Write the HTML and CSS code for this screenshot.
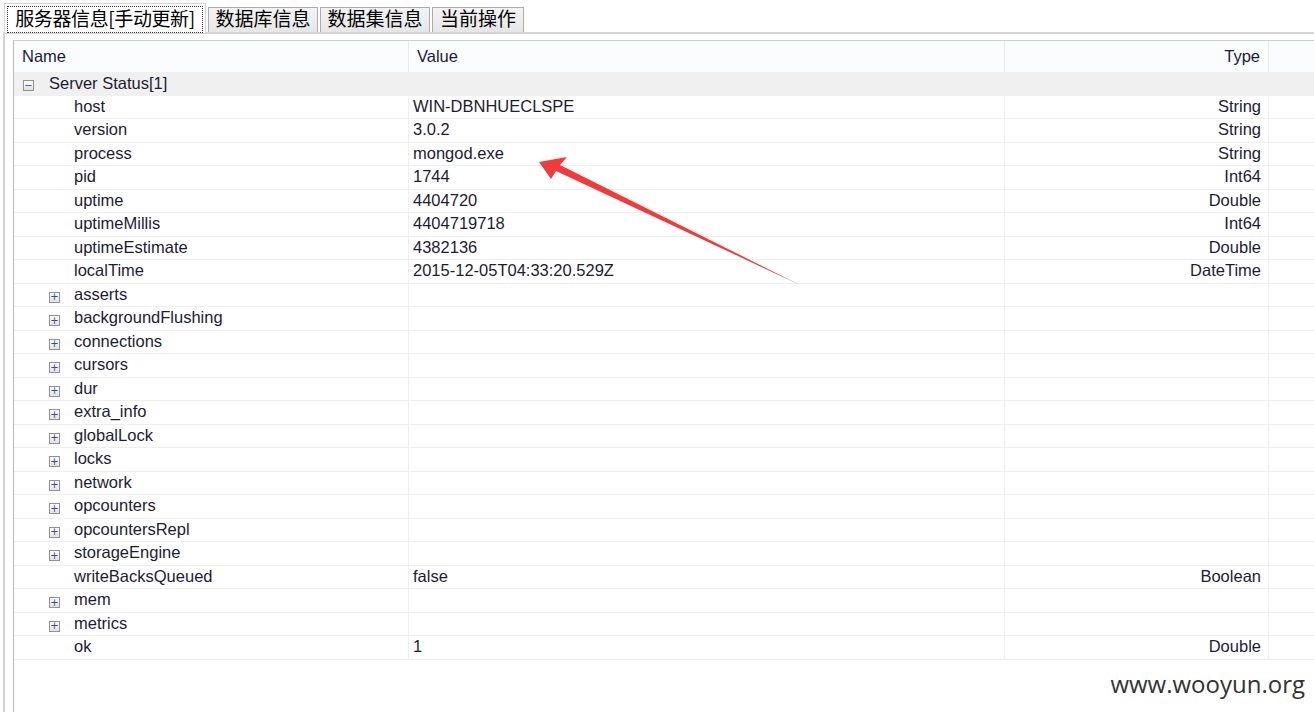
FILE: index.html
```html
<!DOCTYPE html>
<html lang="zh">

<head>
    <meta charset="UTF-8">
    <title>服务器信息</title>
    <link rel="stylesheet" href="styles.css">
</head>

<body>
    <div class="tabs">
        <div class="tab tab-active"><span class="tab-focus">服务器信息[手动更新]</span></div>
        <div class="tab tab-wide">数据库信息</div>
        <div class="tab tab-wide">数据集信息</div>
        <div class="tab tab-narrow">当前操作</div>
    </div>
    <div class="tab-page">
        <div class="tree">
            <div class="tree-head">
                <div class="cell">Name</div>
                <div class="cell">Value</div>
                <div class="cell cell-type">Type</div>
                <div class="cell"></div>
            </div>
            <div class="tree-root">
                <span class="toggle">&minus;</span>
                <span>Server Status[1]</span>
            </div>
            <div class="row"><div class="cell name">host</div><div class="cell">WIN-DBNHUECLSPE</div><div class="cell cell-type">String</div><div class="cell"></div></div>
            <div class="row"><div class="cell name">version</div><div class="cell">3.0.2</div><div class="cell cell-type">String</div><div class="cell"></div></div>
            <div class="row"><div class="cell name">process</div><div class="cell">mongod.exe</div><div class="cell cell-type">String</div><div class="cell"></div></div>
            <div class="row"><div class="cell name">pid</div><div class="cell">1744</div><div class="cell cell-type">Int64</div><div class="cell"></div></div>
            <div class="row"><div class="cell name">uptime</div><div class="cell">4404720</div><div class="cell cell-type">Double</div><div class="cell"></div></div>
            <div class="row"><div class="cell name">uptimeMillis</div><div class="cell">4404719718</div><div class="cell cell-type">Int64</div><div class="cell"></div></div>
            <div class="row"><div class="cell name">uptimeEstimate</div><div class="cell">4382136</div><div class="cell cell-type">Double</div><div class="cell"></div></div>
            <div class="row"><div class="cell name">localTime</div><div class="cell">2015-12-05T04:33:20.529Z</div><div class="cell cell-type">DateTime</div><div class="cell"></div></div>
            <div class="row"><div class="cell name"><span class="toggle">+</span>asserts</div><div class="cell"></div><div class="cell cell-type"></div><div class="cell"></div></div>
            <div class="row"><div class="cell name"><span class="toggle">+</span>backgroundFlushing</div><div class="cell"></div><div class="cell cell-type"></div><div class="cell"></div></div>
            <div class="row"><div class="cell name"><span class="toggle">+</span>connections</div><div class="cell"></div><div class="cell cell-type"></div><div class="cell"></div></div>
            <div class="row"><div class="cell name"><span class="toggle">+</span>cursors</div><div class="cell"></div><div class="cell cell-type"></div><div class="cell"></div></div>
            <div class="row"><div class="cell name"><span class="toggle">+</span>dur</div><div class="cell"></div><div class="cell cell-type"></div><div class="cell"></div></div>
            <div class="row"><div class="cell name"><span class="toggle">+</span>extra_info</div><div class="cell"></div><div class="cell cell-type"></div><div class="cell"></div></div>
            <div class="row"><div class="cell name"><span class="toggle">+</span>globalLock</div><div class="cell"></div><div class="cell cell-type"></div><div class="cell"></div></div>
            <div class="row"><div class="cell name"><span class="toggle">+</span>locks</div><div class="cell"></div><div class="cell cell-type"></div><div class="cell"></div></div>
            <div class="row"><div class="cell name"><span class="toggle">+</span>network</div><div class="cell"></div><div class="cell cell-type"></div><div class="cell"></div></div>
            <div class="row"><div class="cell name"><span class="toggle">+</span>opcounters</div><div class="cell"></div><div class="cell cell-type"></div><div class="cell"></div></div>
            <div class="row"><div class="cell name"><span class="toggle">+</span>opcountersRepl</div><div class="cell"></div><div class="cell cell-type"></div><div class="cell"></div></div>
            <div class="row"><div class="cell name"><span class="toggle">+</span>storageEngine</div><div class="cell"></div><div class="cell cell-type"></div><div class="cell"></div></div>
            <div class="row"><div class="cell name">writeBacksQueued</div><div class="cell">false</div><div class="cell cell-type">Boolean</div><div class="cell"></div></div>
            <div class="row"><div class="cell name"><span class="toggle">+</span>mem</div><div class="cell"></div><div class="cell cell-type"></div><div class="cell"></div></div>
            <div class="row"><div class="cell name"><span class="toggle">+</span>metrics</div><div class="cell"></div><div class="cell cell-type"></div><div class="cell"></div></div>
            <div class="row"><div class="cell name">ok</div><div class="cell">1</div><div class="cell cell-type">Double</div><div class="cell"></div></div>
        </div>
    </div>

    <!-- 标注箭头 -->
    <svg class="arrow" width="1314" height="712" viewBox="0 0 1314 712">
        <polygon points="539,162 567,157 560,165 800,285 556,171 551,179" fill="#f23a3a"/>
    </svg>

    <div class="watermark">www.wooyun.org</div>
</body>

</html>
```

FILE: styles.css
```css
body {
    margin: 0;
    padding: 0;
    background: #fff;
    font-family: "Liberation Sans", Arial, sans-serif;
    font-size: 16.5px;
    color: #1c1c34;
    height: 712px;
    overflow: hidden;
    position: relative;
}

.tabs {
    display: flex;
    align-items: flex-end;
    gap: 2px;
    padding: 3px 0 0 4px;
    height: 29px;
    font-family: "Noto Sans CJK SC", sans-serif;
    font-size: 19px;
    color: #000;
    position: relative;
    z-index: 1;
}

.tab {
    height: 25px;
    padding: 0 0 5px;
    display: flex;
    align-items: center;
    justify-content: center;
    background: linear-gradient(#f3f3f3, #e6e6e6);
    border: 1px solid #acacac;
    border-bottom: none;
    box-sizing: border-box;
    line-height: 1;
}

.tab-wide {
    width: 110px;
}

.tab-narrow {
    width: 92px;
}

.tab-active {
    width: 202px;
    height: 30px;
    padding: 2px 2px 0 2px;
    background: #fff;
    border-color: #d4d4d4;
    margin-bottom: -1px;
}

.tab-focus {
    border: 1px dotted #333;
    width: 100%;
    height: 100%;
    box-sizing: border-box;
    display: flex;
    align-items: center;
    justify-content: center;
    padding-bottom: 5px;
    letter-spacing: -0.4px;
}

.tab-page {
    border-top: 2px solid #d4d4d4;
    border-left: 2px solid #d4d4d4;
    margin-left: 3px;
    padding: 6px 0 0 8px;
    height: 680px;
    box-sizing: border-box;
}

.tree {
    border-top: 1px solid #cfcfcf;
    border-left: 1px solid #b9b9b9;
    height: 100%;
}

.tree-head, .row {
    display: grid;
    grid-template-columns: 395px 596px 264px 1fr;
}

.tree-head {
    height: 31px;
    background: #fbfcfe;
    color: #1a1a3a;
}

.tree-head .cell {
    border-right: 1px solid #e3ecf7;
    padding: 0 8px;
    line-height: 31px;
}

.tree-head .cell:last-child {
    border-right: none;
}

.cell-type {
    text-align: right;
}

.tree-root {
    height: 23.5px;
    background: #f0f0f0;
    display: flex;
    align-items: center;
    padding-left: 9px;
}

.tree-root .toggle {
    margin-right: 15px;
}

.row {
    height: 23.5px;
    box-sizing: border-box;
    border-bottom: 1px solid #efefef;
}

.row .cell {
    border-right: 1px solid #efefef;
    padding: 0 7px 0 4px;
    line-height: 21px;
    white-space: nowrap;
}

.row .cell:last-child {
    border-right: none;
}

.row .name {
    padding-left: 60px;
    position: relative;
}

.toggle {
    display: inline-flex;
    align-items: center;
    justify-content: center;
    width: 9px;
    height: 9px;
    border: 1px solid #929292;
    background: linear-gradient(#fdfdfd, #e2e2e2);
    color: #3a4a9a;
    font-size: 10px;
    line-height: 1;
    font-family: "DejaVu Sans", sans-serif;
    box-sizing: content-box;
    margin-top: 4px;
}

.row .toggle {
    position: absolute;
    left: 35px;
    top: 8px;
    margin: 0;
}

.arrow {
    position: absolute;
    left: 0;
    top: 0;
    pointer-events: none;
}

.watermark {
    position: absolute;
    right: 9px;
    bottom: 12px;
    font-family: "Open Sans", sans-serif;
    font-size: 24px;
    color: #333;
}
```
